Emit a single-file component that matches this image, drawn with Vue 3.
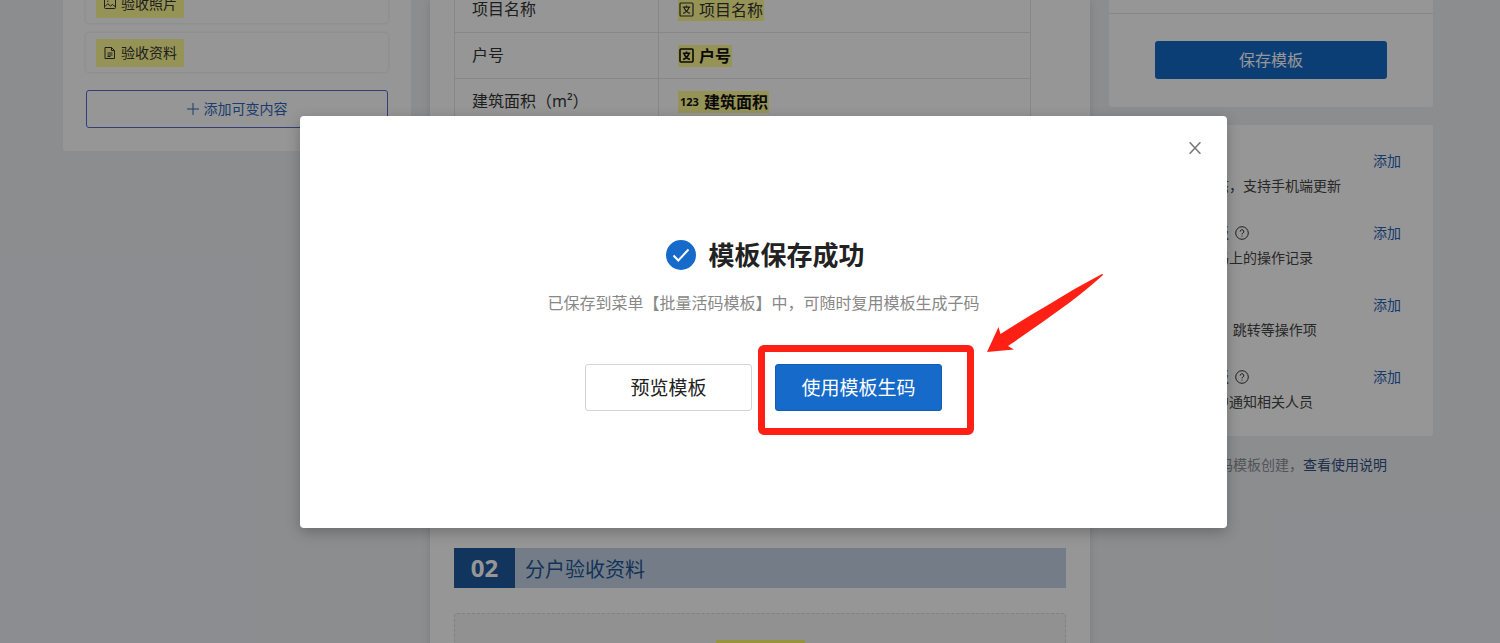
<script setup>
import { ref } from 'vue'

const open = ref(true)

const rows = [
  { label: '项目名称', field: '项目名称', kind: 'text', bold: false },
  { label: '户号', field: '户号', kind: 'text', bold: true },
  { label: '建筑面积（m²）', field: '建筑面积', kind: 'number', bold: true },
]

const features = [
  { title: '状态', help: false, desc: '展示最新的状态，支持手机端更新' },
  { title: '添加动态记录板', help: true, desc: '扫码可记录在码上的操作记录' },
  { title: '操作', help: false, desc: '支持拨打电话 、跳转等操作项' },
  { title: '添加消息通知板', help: true, desc: '在有更新动态中通知相关人员' },
]
</script>

<template>
  <div class="app">
    <main class="page">
      <aside class="left card">
        <div class="item">
          <span class="tag">
            <svg class="ico" viewBox="0 0 14 14" aria-hidden="true">
              <rect x="1.5" y="1.5" width="11" height="10" rx="1" />
              <path d="M2 9.5 4.8 6.7 7.5 9 9.5 7.5 12 9.5M4 4.2h1.5" />
            </svg>
            验收照片
          </span>
        </div>
        <div class="item">
          <span class="tag">
            <svg class="ico" viewBox="0 0 14 14" aria-hidden="true">
              <path d="M2 1.5h6.5l3 3v8H2zM8.5 1.5v3h3M4.5 7h5M4.5 9h5M4.5 10.5h3" />
            </svg>
            验收资料
          </span>
        </div>
        <button class="add" type="button">
          <svg class="plus" viewBox="0 0 12 12" aria-hidden="true"><path d="M6 0v12M0 6h12" /></svg>
          添加可变内容
        </button>
      </aside>

      <section class="center">
        <table class="fields">
          <tbody>
            <tr v-for="r in rows" :key="r.label">
              <td class="name">{{ r.label }}</td>
              <td class="value">
                <span class="mark" :class="{ bold: r.bold }">
                  <svg v-if="r.kind === 'text'" class="wen" viewBox="0 0 15 15" aria-hidden="true">
                    <rect x="1" y="1" width="13" height="13" rx="1" />
                    <path d="M3.8 5.2h7.4M7.5 3.4v1.8M5 5.4c.9 2.8 2.7 4.8 5.9 6M10 5.4c-.9 2.800-2.700 4.800-5.900 6" />
                  </svg>
                  <span v-else class="num">123</span>
                  {{ r.field }}
                </span>
              </td>
            </tr>
          </tbody>
        </table>
        <h2 class="section"><span class="no">02</span><span class="sname">分户验收资料</span></h2>
        <div class="drop"><span class="drop-tag"></span></div>
      </section>

      <aside class="right">
        <div class="card save-card">
          <button class="save" type="button">保存模板</button>
        </div>
        <div class="card features">
          <div v-for="f in features" :key="f.title" class="feature">
            <div class="fhead">
              <span>{{ f.title }}</span>
              <svg v-if="f.help" class="help" viewBox="0 0 14 14" aria-hidden="true">
                <circle cx="7" cy="7" r="6.3" />
                <path d="M5.2 5.6a1.8 1.8 0 1 1 2.7 1.5c-.6.4-.9.7-.9 1.4M7 9.7v1" />
              </svg>
              <a href="#" class="link">添加</a>
            </div>
            <p class="fdesc">{{ f.desc }}</p>
          </div>
        </div>
        <p class="foot">用批量活码模板创建，<a href="#">查看使用说明</a></p>
      </aside>
    </main>

    <div v-if="open" class="mask">
      <div class="modal" role="dialog" aria-modal="true" aria-labelledby="dlg-title">
        <button class="close" type="button" aria-label="关闭" @click="open = false">
          <svg viewBox="0 0 12 12" aria-hidden="true"><path d="M.6.2 11.400 11.800M11.400.2.6 11.800" /></svg>
        </button>
        <div class="head">
          <svg class="ok" viewBox="0 0 30 30" aria-hidden="true">
            <circle cx="15" cy="15" r="15" />
            <path d="M7.500 15.500 12.300 20.500 22.500 9.500" />
          </svg>
          <h1 id="dlg-title">模板保存成功</h1>
        </div>
        <p class="sub">已保存到菜单【批量活码模板】中，可随时复用模板生成子码</p>
        <div class="actions">
          <button class="btn" type="button">预览模板</button>
          <div class="target">
            <button class="btn primary" type="button">使用模板生码</button>
            <span class="frame"></span>
            <svg class="arrow" viewBox="0 0 116 79" aria-hidden="true">
              <path d="M0 78 11.500 53 13.500 60Q35 46 61 31 88 14 115 0L116 0 115.500 1.500Q98 17 82 29 52 51 21 72L27 75.500Z" />
            </svg>
          </div>
        </div>
      </div>
    </div>
  </div>
</template>

<style>
body {
  margin: 0;
  background: #edf0f4;
}
</style>

<style scoped>
.app {
  height: 100vh;
  overflow: hidden;
  position: relative;
  font-family: "Noto Sans", "Noto Sans CJK SC", sans-serif;
  font-size: 14px;
  line-height: 22px;
  color: #333;
}
.app * {
  box-sizing: border-box;
}
button {
  font: inherit;
  cursor: pointer;
  margin: 0;
}
p,
h1,
h2 {
  margin: 0;
}
a {
  text-decoration: none;
}
svg {
  fill: none;
  stroke: currentColor;
  flex: none;
}
.page {
  display: grid;
  grid-template-columns: 348fr 660fr 324fr;
  gap: 19px;
  align-items: start;
  padding: 0 67px 0 63px;
}
.card {
  background: #fff;
  border-radius: 0 0 3px 3px;
}
.left {
  display: flex;
  flex-direction: column;
  gap: 10px;
  margin-top: -16px;
  padding: 0 23px 23px;
}
.item {
  height: 39px;
  padding: 0 10px;
  display: flex;
  align-items: center;
  border-radius: 3px;
  box-shadow: 0 0 3px rgba(0, 0, 0, 0.14);
}
.tag {
  display: flex;
  align-items: center;
  gap: 4px;
  height: 28px;
  padding: 0 7px;
  background: #fffa94;
}
.ico {
  width: 14px;
  height: 14px;
}
.add {
  height: 38px;
  margin-top: 8px;
  display: flex;
  align-items: center;
  justify-content: center;
  gap: 5px;
  border: 1px solid #5a68cc;
  border-radius: 3px;
  background: #fff;
  color: #2f67b8;
}
.plus {
  width: 12px;
  height: 12px;
}
.center {
  background: #fff;
  min-height: 100vh;
  padding: 0 24px;
  box-shadow: 0 0 8px rgba(0, 0, 0, 0.12);
}
.fields {
  width: 577px;
  max-width: 100%;
  margin-top: -14px;
  border-collapse: collapse;
  table-layout: fixed;
  font-size: 16px;
}
.fields td {
  height: 46px;
  border: 1px solid #e4e6ea;
}
.fields .name {
  width: 204px;
  padding: 0 17px 2px;
}
.fields .value {
  padding: 0 19px;
}
.mark {
  display: flex;
  width: fit-content;
  align-items: center;
  gap: 5px;
  height: 22px;
  padding: 0 1px;
  background: #fffa94;
}
.mark.bold {
  font-weight: 700;
  color: #111;
}
.wen {
  width: 15px;
  height: 15px;
  stroke-width: 1.2;
}
.bold .wen {
  stroke-width: 1.6;
}
.num {
  font-size: 11px;
  padding-left: 1px;
}
.section {
  margin-top: 423px;
  height: 40px;
  display: flex;
  align-items: center;
  background: #c6d5e6;
  color: #1f5599;
  font-size: 20px;
  font-weight: 400;
}
.no {
  align-self: stretch;
  width: 61px;
  display: flex;
  align-items: center;
  justify-content: center;
  background: #1f5a9f;
  color: #fff;
  font-size: 24px;
  font-weight: 700;
}
.sname {
  padding: 4px 0 0 10px;
}
.drop {
  margin-top: 25px;
  height: 120px;
  padding-top: 26px;
  display: flex;
  justify-content: center;
  background: #f7f7f7;
  border: 1px dashed #dcdcdc;
  border-radius: 3px;
}
.drop-tag {
  width: 89px;
  height: 28px;
  background: #fffa66;
}
.save-card {
  padding: 27px 46px 28px;
  margin-top: 13px;
  border-top: 1px solid #e4e6ea;
  box-shadow: 0 -13px #fff;
}
.save {
  width: 100%;
  height: 38px;
  border: 0;
  border-radius: 3px;
  background: #166ac9;
  color: #fff;
  font-size: 16px;
}
.features {
  margin-top: 18px;
  padding: 25px 32px 23px 22px;
  display: flex;
  flex-direction: column;
  gap: 25px;
}
.feature {
  display: flex;
  flex-direction: column;
  gap: 3px;
}
.fhead {
  display: flex;
  align-items: center;
  gap: 6px;
}
.help {
  width: 14px;
  height: 14px;
}
.link {
  margin-left: auto;
  color: #1f63b8;
}
.fdesc {
  white-space: pre;
  color: #444;
}
.foot {
  margin-top: 18px;
  padding-right: 46px;
  text-align: right;
  color: #8c8f94;
}
.foot a {
  color: #34507f;
}
.mask {
  position: absolute;
  inset: 0;
  display: flex;
  justify-content: center;
  align-items: flex-start;
  padding: 116px 0 0 27px;
  background: rgba(0, 0, 0, 0.41);
}
.modal {
  position: relative;
  width: 927px;
  max-width: 100%;
  padding: 122px 24px 117px;
  display: flex;
  flex-direction: column;
  align-items: center;
  background: #fff;
  border-radius: 4px;
  box-shadow: 0 4px 14px rgba(0, 0, 0, 0.25);
}
.close {
  position: absolute;
  top: 20px;
  right: 20px;
  width: 24px;
  height: 24px;
  padding: 6px;
  border: 0;
  background: none;
  color: #777;
}
.close svg {
  display: block;
  width: 12px;
  height: 12px;
  stroke-width: 1.5;
}
.head {
  display: flex;
  align-items: center;
  gap: 12px;
  height: 34px;
  padding-left: 4px;
}
.ok {
  width: 30px;
  height: 30px;
  stroke: #fff;
  stroke-width: 2;
}
.ok circle {
  fill: #166ac9;
  stroke: none;
}
h1 {
  font-size: 26px;
  line-height: 34px;
  font-weight: 700;
  color: #222;
}
.sub {
  margin-top: 20px;
  font-size: 16px;
  color: #888;
}
.actions {
  display: flex;
  gap: 23px;
  margin-top: 50px;
}
.btn {
  width: 167px;
  height: 47px;
  padding: 0;
  border: 1px solid #d4d4d4;
  border-radius: 3px;
  background: #fff;
  color: #222;
  font-size: 19px;
}
.primary {
  border-color: #125db8;
  background: #166ac9;
  color: #fff;
}
.target {
  position: relative;
}
.frame {
  position: absolute;
  inset: -19px -32px -24px -17px;
  border: 7px solid #ff2015;
  border-radius: 6px;
  pointer-events: none;
}
.arrow {
  position: absolute;
  left: 212px;
  top: -90px;
  width: 116px;
  height: 79px;
  fill: #ff2015;
  stroke: none;
  pointer-events: none;
}
</style>
